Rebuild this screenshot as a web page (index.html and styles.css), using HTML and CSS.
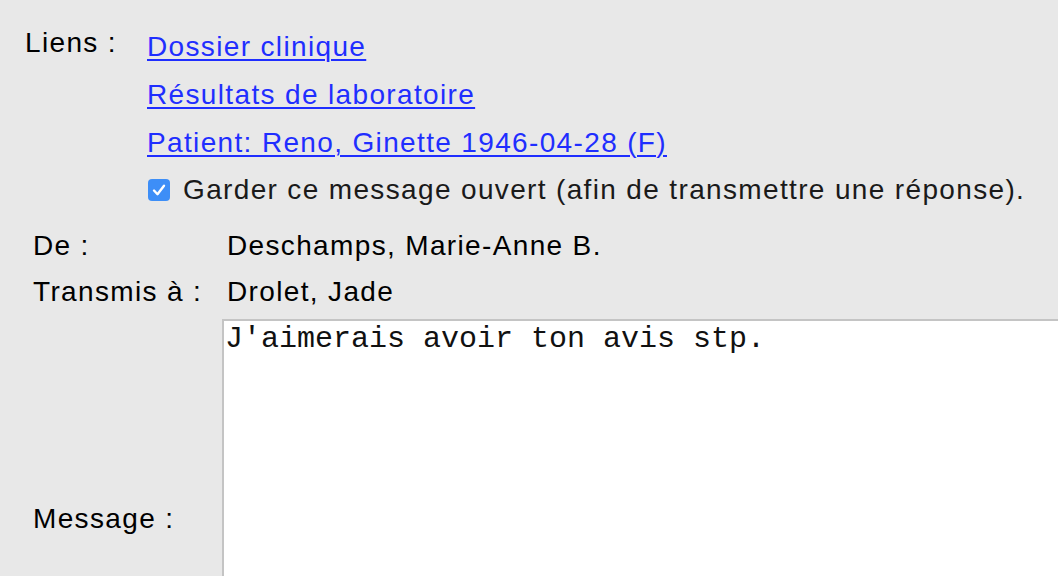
FILE: index.html
```html
<!DOCTYPE html>
<html lang="fr">
<head>
<meta charset="utf-8">
<link rel="stylesheet" href="styles.css">
</head>
<body>
<div class="page">
  <div class="links-block">
    <div class="links-label">Liens :</div>
    <div class="links-list">
      <a class="link" href="#">Dossier clinique</a>
      <a class="link" href="#">Résultats de laboratoire</a>
      <a class="link" href="#">Patient: Reno, Ginette 1946-04-28 (F)</a>
      <label class="keep">
        <span class="check"><svg width="22" height="22" viewBox="0 0 22 22"><rect x="0" y="0" width="22" height="22" rx="4" fill="#3d8ef7"/><path d="M6 11.5 L9.5 15.2 L16 6.8" fill="none" stroke="#fff" stroke-width="2.4" stroke-linecap="round" stroke-linejoin="round"/></svg></span>
        <span class="keep-text">Garder ce message ouvert (afin de transmettre une réponse).</span>
      </label>
    </div>
  </div>
  <div class="fields">
    <div class="f-label">De :</div>
    <div class="f-value">Deschamps, Marie-Anne B.</div>
    <div class="f-label">Transmis à :</div>
    <div class="f-value">Drolet, Jade</div>
    <div class="f-label msg-label">Message :</div>
    <div class="msg-box">J'aimerais avoir ton avis stp.</div>
  </div>
</div>
</body>
</html>
```

FILE: styles.css
```css
html, body {
  margin: 0;
  padding: 0;
  background: #e8e8e8;
  overflow: hidden;
}
.page {
  width: 1058px;
  height: 576px;
  overflow: hidden;
  font-family: "Liberation Sans", Arial, sans-serif;
  font-size: 28px;
  letter-spacing: 1.35px;
  color: #000;
}
.links-block {
  display: flex;
  padding-top: 24px;
}
.links-label {
  width: 122px;
  padding-left: 25px;
  line-height: 38px;
  margin-top: 0;
}
.links-list {
  display: flex;
  flex-direction: column;
  align-items: flex-start;
}
.link {
  color: #1f2eff;
  text-decoration: underline;
  text-decoration-thickness: 2px;
  text-underline-offset: 3px;
  line-height: 48px;
  height: 48px;
  margin-top: -1px;
  margin-bottom: 1px;
}
.keep {
  display: flex;
  align-items: center;
  height: 46px;
  margin-top: -1px;
  color: #1a1a1a;
}
.check {
  display: flex;
  width: 22px;
  height: 22px;
  margin-left: 1px;
  margin-right: 13px;
}
.fields {
  display: grid;
  grid-template-columns: 222px 1fr;
  margin-top: 10px;
}
.f-label {
  padding-left: 33px;
  line-height: 46px;
  height: 46px;
}
.f-value {
  padding-left: 5px;
  line-height: 46px;
  height: 46px;
}
.msg-label {
  height: 396px;
  line-height: 396px;
  margin-top: 6px;
}
.msg-box {
  height: 396px;
  margin-top: 4px;
  background: #fff;
  border-top: 2px solid #c4c4c4;
  border-left: 2px solid #c4c4c4;
  font-family: "Liberation Mono", "Courier New", monospace;
  font-size: 30px;
  letter-spacing: 0;
  line-height: 32px;
  padding-left: 1px;
  padding-top: 2px;
  color: #111;
}
```
